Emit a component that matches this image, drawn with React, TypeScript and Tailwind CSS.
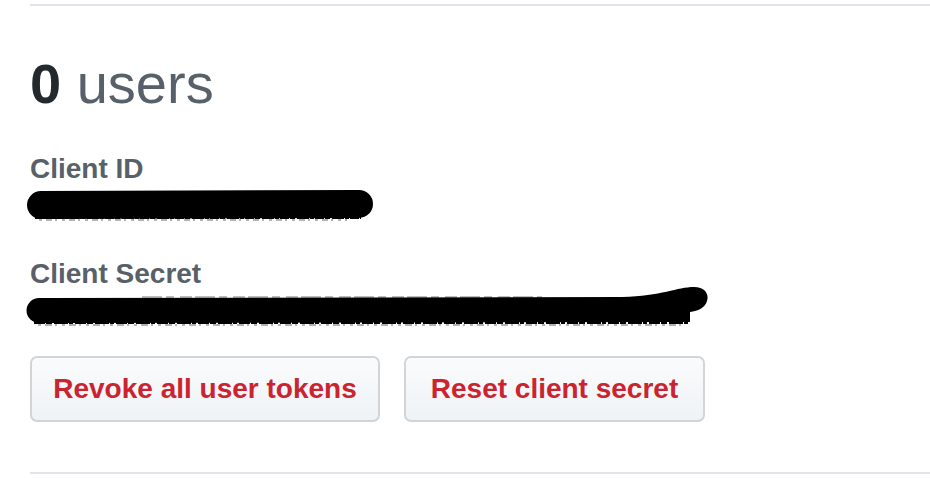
import React from "react";

function ScribbleOne() {
  return (
    <svg width="345" height="36" viewBox="0 0 345 36" className="block ml-[-3px] mt-[5px] overflow-visible">
      <path d="M14 17 L332 16" stroke="#000" strokeWidth="28" strokeLinecap="round" fill="none" />
      <path d="M8 29 L334 29" stroke="#000" strokeWidth="4" strokeDasharray="9 1 5 2 12 1 4 1" fill="none" />
      <path d="M12 32 L320 32" stroke="#000" strokeWidth="1.5" strokeDasharray="3 4 6 3 2 5" fill="none" opacity="0.4" />
    </svg>
  );
}

function ScribbleTwo() {
  return (
    <svg width="690" height="40" viewBox="0 0 690 40" className="block ml-[-8px] mt-[-2px] overflow-visible">
      <path
        d="M17 12 L600 11 C 640 10, 655 1, 672 1 C 684 1, 687 9, 685 15 C 683 22, 676 25, 668 26 L 668 36 L 17 37 A 12.5 12.5 0 0 1 17 12 Z"
        fill="#000"
      />
      <path d="M12 36 L668 36" stroke="#000" strokeWidth="4" strokeDasharray="11 1 6 2 14 1 4 2" fill="none" />
      <path d="M16 39 L660 39" stroke="#000" strokeWidth="1.5" strokeDasharray="3 4 7 3 2 5" fill="none" opacity="0.4" />
      <path d="M120 11 L520 11" stroke="#000" strokeWidth="1.5" strokeDasharray="20 4 8 6 12 3" fill="none" opacity="0.35" />
    </svg>
  );
}

export default function App() {
  return (
    <div
      className="w-[930px] h-[478px] bg-white pt-[4px] pl-[30px] overflow-hidden"
      style={{ fontFamily: '"Liberation Sans", Arial, sans-serif' }}
    >
      <div className="border-t-2 border-b-2 border-[#e1e4e8] pb-[50px]">
        <h1 className="mt-[50px] text-[56px] leading-[56px] text-[#586069] font-normal">
          <span className="font-bold text-[#24292e]">0</span> users
        </h1>
        <div className="mt-[43px] text-[28px] leading-[28px] font-bold text-[#586069]">Client ID</div>
        <ScribbleOne />
        <div className="mt-[36px] text-[28px] leading-[28px] font-bold text-[#586069]">Client Secret</div>
        <ScribbleTwo />
        <div className="mt-[30px] flex gap-[24px]">
          <button className="w-[350px] h-[66px] flex items-center justify-center rounded-[7px] border-2 border-[#d1d5da] bg-linear-to-b from-[#fafbfc] to-[#eff3f6] text-[28px] leading-[28px] font-bold text-[#cb2431]">
            Revoke all user tokens
          </button>
          <button className="w-[301px] h-[66px] flex items-center justify-center rounded-[7px] border-2 border-[#d1d5da] bg-linear-to-b from-[#fafbfc] to-[#eff3f6] text-[28px] leading-[28px] font-bold text-[#cb2431]">
            Reset client secret
          </button>
        </div>
      </div>
    </div>
  );
}
